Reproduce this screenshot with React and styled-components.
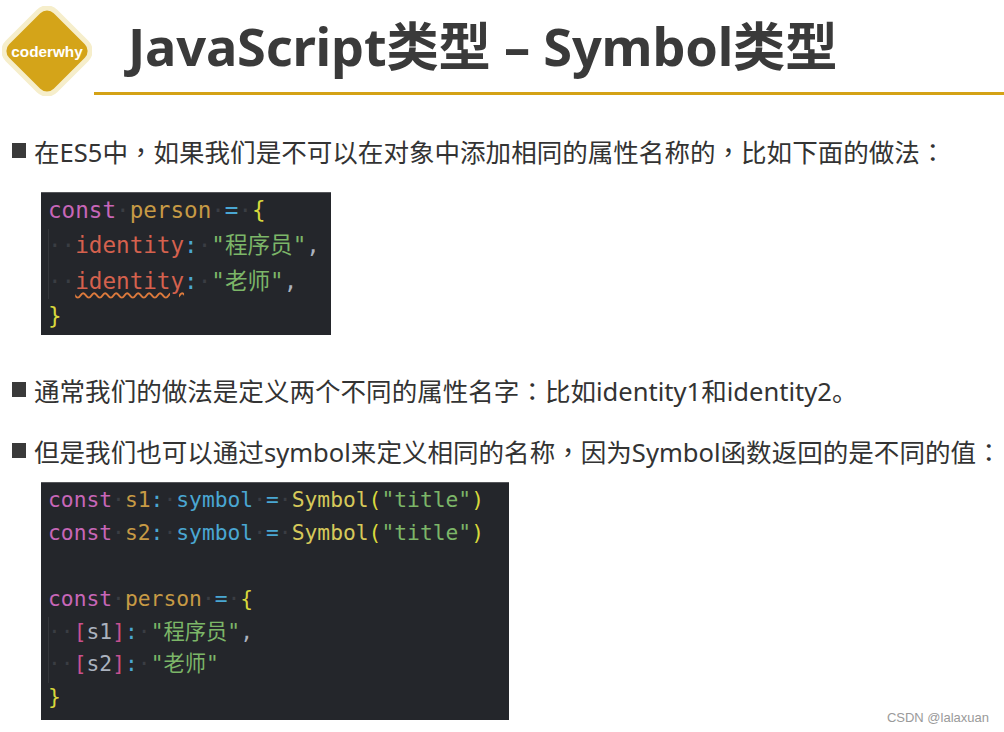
import React from 'react';
import styled, { createGlobalStyle } from 'styled-components';

const Global = createGlobalStyle`
  html, body { margin: 0; padding: 0; background: #fff; }
  body { width: 1004px; height: 732px; overflow: hidden; }
`;
const Page = styled.div`
  position: relative;
  width: 1004px;
  height: 732px;
  background: #fff;
  font-family: "Noto Sans", "Noto Sans CJK SC", sans-serif;
  color: #333;
  overflow: hidden;
`;
const Header = styled.header`
  display: flex;
  align-items: flex-start;
  padding: 6px 0 0 2px;
  height: 96px;
  box-sizing: border-box;
`;
const LogoBox = styled.svg`
  flex: none;
  width: 90px;
  height: 90px;
`;
const HeaderMain = styled.div`
  flex: 1;
  margin-left: 2px;
  height: 89px;
  display: flex;
  flex-direction: column;
  justify-content: flex-end;
`;
const Title = styled.h1`
  margin: 0;
  padding-left: 34px;
  font-size: 52.3px;
  line-height: 70px;
  font-weight: 700;
  color: #3a3a3a;
  white-space: nowrap;
  letter-spacing: -0.2px;
`;
const Rule = styled.div`
  height: 3px;
  margin-top: 11px;
  background: #d4a216;
`;
const Content = styled.main`
  display: flex;
  flex-direction: column;
  padding: 0 0 0 12px;
`;
const Bullet = styled.div`
  display: flex;
  align-items: center;
  gap: 8px;
  height: 36px;
  margin-top: ${p => p.$top}px;
  font-size: 25.55px;
  font-weight: 400;
  white-space: nowrap;
  color: #333;
`;
const Square = styled.span`
  flex: none;
  width: 14px;
  height: 15px;
  background: #3a3a3a;
`;
const Punct = styled.span`
  font-family: "Noto Sans CJK TC", sans-serif;
`;
const CodeBlock = styled.pre`
  position: relative;
  box-sizing: border-box;
  margin: ${p => p.$top}px 0 0 29px;
  width: ${p => p.$w}px;
  height: ${p => p.$h}px;
  padding: ${p => p.$pad}px 0 0 7px;
  background: #24262b;
  border-top: 1px solid #55565a;
  font-family: "DejaVu Sans Mono", "Noto Sans CJK SC", monospace;
  font-size: ${p => p.$size}px;
  line-height: ${p => p.$line}px;
  color: #abb2bf;
`;
const Guide = styled.i`
  position: absolute;
  left: 7px;
  top: ${p => p.$top}px;
  height: ${p => p.$h}px;
  width: 1px;
  background: #33353a;
`;
const Line = styled.div`
  height: ${p => p.$line}px;
  white-space: pre;
`;
const Tok = styled.span`
  color: ${p => p.$c};
`;
const Dot = styled.span`
  color: #3a3d43;
`;
const Squiggle = styled.span`
  color: #d5614e;
  text-decoration: underline wavy #dd7a3c 1.5px;
  text-underline-offset: 3px;
`;
const Cjk = styled.span`
  font-family: "Noto Sans CJK SC", sans-serif;
  line-height: 0;
`;
const Watermark = styled.div`
  position: absolute;
  right: 15px;
  bottom: 7px;
  font-family: "Liberation Sans", sans-serif;
  font-size: 13px;
  color: #9a9a9a;
`;

const PINK = '#c766b8', GOLD = '#c79a45', BLUE = '#4aa7d3', YEL = '#d6c95a', BR = '#d8d83c',
  RED = '#d5614e', GREEN = '#7cb668', GREY = '#abb2bf', MAG = '#c8508f';

const Logo = () => (
  <LogoBox viewBox="0 0 90 90">
    <rect x="11" y="11" width="68" height="68" rx="12" transform="rotate(45 45 45)" fill="#d4a419" stroke="#f6eecb" strokeWidth="5" />
    <text x="45" y="50.5" textAnchor="middle" fontFamily="Liberation Sans, sans-serif" fontWeight="700" fontSize="15.3" fill="#fff">coderwhy</text>
  </LogoBox>
);

export default function App() {
  const d = <Dot>·</Dot>;
  const c = <Punct>，</Punct>;
  const k = <Punct>：</Punct>;
  return (
    <Page>
      <Global />
      <Header>
        <Logo />
        <HeaderMain>
          <Title>JavaScript类型 – Symbol类型</Title>
          <Rule />
        </HeaderMain>
      </Header>
      <Content>
        <Bullet $top={36}><Square /><span>在ES5中{c}如果我们是不可以在对象中添加相同的属性名称的{c}比如下面的做法{k}</span></Bullet>
        <CodeBlock $top={24} $w={290} $h={143} $pad={0} $size={22.6} $line={35.3}>
          <Guide $top={36} $h={70} />
          <Line $line={35.3}><Tok $c={PINK}>const</Tok>{d}<Tok $c={GOLD}>person</Tok>{d}<Tok $c={BLUE}>=</Tok>{d}<Tok $c={BR}>{'{'}</Tok></Line>
          <Line $line={35.3}>{d}{d}<Tok $c={RED}>identity</Tok><Tok $c={BLUE}>:</Tok>{d}<Tok $c={GREEN}>"<Cjk>程序员</Cjk>"</Tok><Tok $c={GREY}>,</Tok></Line>
          <Line $line={35.3}>{d}{d}<Squiggle>identity</Squiggle><Tok $c={BLUE}>:</Tok>{d}<Tok $c={GREEN}>"<Cjk>老师</Cjk>"</Tok><Tok $c={GREY}>,</Tok></Line>
          <Line $line={35.3}><Tok $c={BR}>{'}'}</Tok></Line>
        </CodeBlock>
        <Bullet $top={36}><Square /><span>通常我们的做法是定义两个不同的属性名字{k}比如identity1和identity2。</span></Bullet>
        <Bullet $top={25}><Square /><span>但是我们也可以通过symbol来定义相同的名称{c}因为Symbol函数返回的是不同的值{k}</span></Bullet>
        <CodeBlock $top={14} $w={468} $h={238} $pad={1} $size={21.3} $line={32.9}>
          <Guide $top={134} $h={66} />
          <Line $line={32.9}><Tok $c={PINK}>const</Tok>{d}<Tok $c={GOLD}>s1</Tok><Tok $c={BLUE}>:</Tok>{d}<Tok $c={BLUE}>symbol</Tok>{d}<Tok $c={BLUE}>=</Tok>{d}<Tok $c={YEL}>Symbol</Tok><Tok $c={BR}>(</Tok><Tok $c={GREEN}>"title"</Tok><Tok $c={BR}>)</Tok></Line>
          <Line $line={32.9}><Tok $c={PINK}>const</Tok>{d}<Tok $c={GOLD}>s2</Tok><Tok $c={BLUE}>:</Tok>{d}<Tok $c={BLUE}>symbol</Tok>{d}<Tok $c={BLUE}>=</Tok>{d}<Tok $c={YEL}>Symbol</Tok><Tok $c={BR}>(</Tok><Tok $c={GREEN}>"title"</Tok><Tok $c={BR}>)</Tok></Line>
          <Line $line={32.9}> </Line>
          <Line $line={32.9}><Tok $c={PINK}>const</Tok>{d}<Tok $c={GOLD}>person</Tok>{d}<Tok $c={BLUE}>=</Tok>{d}<Tok $c={BR}>{'{'}</Tok></Line>
          <Line $line={32.9}>{d}{d}<Tok $c={MAG}>[</Tok><Tok $c={GREY}>s1</Tok><Tok $c={MAG}>]</Tok><Tok $c={BLUE}>:</Tok>{d}<Tok $c={GREEN}>"<Cjk>程序员</Cjk>"</Tok><Tok $c={GREY}>,</Tok></Line>
          <Line $line={32.9}>{d}{d}<Tok $c={MAG}>[</Tok><Tok $c={GREY}>s2</Tok><Tok $c={MAG}>]</Tok><Tok $c={BLUE}>:</Tok>{d}<Tok $c={GREEN}>"<Cjk>老师</Cjk>"</Tok></Line>
          <Line $line={32.9}><Tok $c={BR}>{'}'}</Tok></Line>
        </CodeBlock>
      </Content>
      <Watermark>CSDN @lalaxuan</Watermark>
    </Page>
  );
}
